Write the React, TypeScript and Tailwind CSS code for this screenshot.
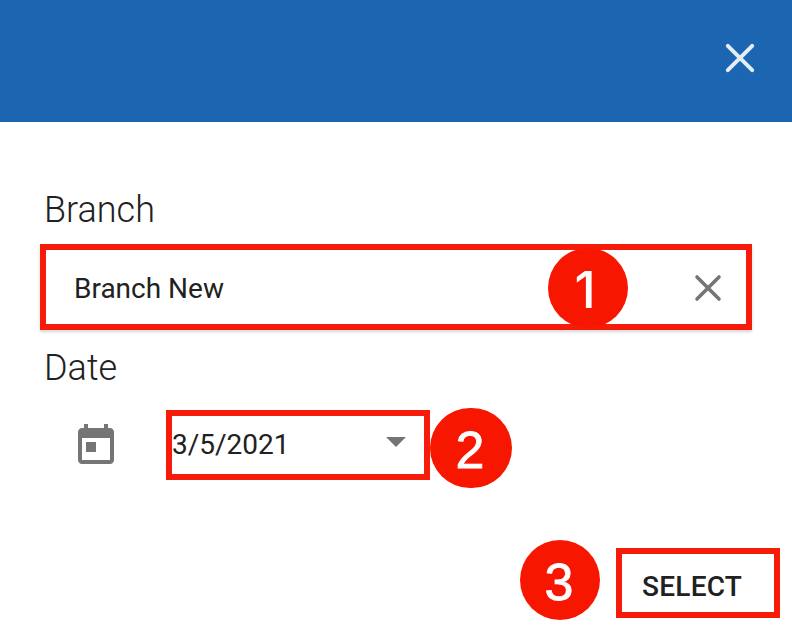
import React from "react";

function Cross({ className, reach, stroke }: { className: string; reach: number; stroke: number }) {
  const a = 20 - reach;
  const b = 20 + reach;
  return (
    <svg className={className} viewBox="0 0 40 40" fill="none" stroke="currentColor" strokeWidth={stroke} strokeLinecap="round">
      <path d={`M${a} ${a}L${b} ${b}M${b} ${a}L${a} ${b}`} />
    </svg>
  );
}

function Badge({ label, className }: { label: string; className: string }) {
  return (
    <span
      className={`flex h-20 shrink-0 items-center justify-center rounded-full bg-[#f71700] leading-none text-white ${className}`}
    >
      {label}
    </span>
  );
}

export default function App() {
  return (
    <div className="flex h-[634px] w-[792px] flex-col overflow-hidden bg-white text-[#212121] [font-family:Roboto,sans-serif]">
      <header className="flex h-[122px] shrink-0 items-start justify-end bg-[#1c66b1] pt-[38px] pr-8">
        <button aria-label="Close" className="text-[#e4ecf7]">
          <Cross className="size-10" reach={12.2} stroke={4} />
        </button>
      </header>

      <main className="flex flex-col">
        <label className="mt-[66px] ml-11 h-11 text-[36px] leading-11 font-light">Branch</label>
        <div className="mt-3 ml-10 flex h-[86px] w-[712px] items-center border-6 border-[#f71c09] pt-[2px] pr-[18px] pl-7 shadow-[0_2px_3px_rgba(0,0,0,0.16)]">
          <span className="flex-1 pt-[2px] text-[28px] leading-8">Branch New</span>
          <Badge label="1" className="mr-[60px] w-20 pt-[3px] pr-[6px] text-[51px] font-medium [font-family:Inter,sans-serif]" />
          <button aria-label="Clear branch" className="text-[#757575]">
            <Cross className="size-10" reach={11} stroke={3.6} />
          </button>
        </div>

        <label className="mt-4 ml-11 h-11 text-[36px] leading-11 font-light">Date</label>
        <div className="mt-[18px] flex h-20 items-center pl-18">
          <svg className="mt-[-4px] mr-[46px] size-12 text-[#757575]" viewBox="0 0 24 24" fill="currentColor">
            <path d="M19 3h-1V1h-2v2H8V1H6v2H5c-1.11 0-1.99.9-1.99 2L3 19c0 1.1.89 2 2 2h14c1.1 0 2-.9 2-2V5c0-1.1-.9-2-2-2zm0 16H5V8h14v11zM7 10h5v5H7z" />
          </svg>
          <div className="mt-[-6px] flex h-[70px] w-[264px] items-center border-6 border-[#f71c09] pr-[18px]">
            <span className="flex-1 text-[28px] leading-8">3/5/2021</span>
            <svg className="mt-[-6px] h-[10px] w-5 text-[#757575]" viewBox="0 0 20 10" fill="currentColor">
              <path d="M0 0h20L10 10z" />
            </svg>
          </div>
          <Badge
            label="2"
            className="w-[82px] pt-1 pr-[2px] text-[52px] [font-family:'Liberation_Sans',Arial,sans-serif] [-webkit-text-stroke:0.8px_white]"
          />
        </div>

        <div className="mt-[52px] flex h-20 items-center justify-end gap-4 pr-3">
          <Badge
            label="3"
            className="w-20 pt-1 pr-[2px] text-[52px] [font-family:'Liberation_Sans',Arial,sans-serif] [-webkit-text-stroke:0.8px_white]"
          />
          <button className="mt-[6px] flex h-[70px] w-[164px] items-center border-6 border-[#f71c09] pt-[7px] pl-5 text-[28px] leading-8 font-medium tracking-[0.25px]">
            SELECT
          </button>
        </div>
      </main>
    </div>
  );
}
